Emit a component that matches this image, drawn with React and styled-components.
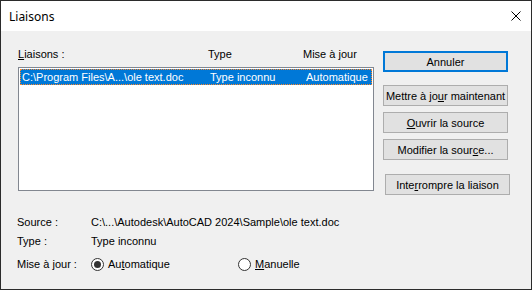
import React from 'react'
import styled, { createGlobalStyle } from 'styled-components'

const GlobalStyle = createGlobalStyle`
  html, body {
    margin: 0;
    padding: 0;
    background: #ffffff;
  }
  body {
    font-family: "Liberation Sans", Arial, sans-serif;
    font-size: 11px;
    color: #000000;
  }
`

const Window = styled.div`
  width: 532px;
  height: 290px;
  box-sizing: border-box;
  border: 1px solid #2b2b2b;
  background: #f0f0f0;
  display: flex;
  flex-direction: column;
`
const TitleBar = styled.div`
  height: 30px;
  flex-shrink: 0;
  background: #ffffff;
  display: flex;
  align-items: center;
  justify-content: space-between;
  padding: 0 10px 0 8px;
  font-family: "Noto Sans", "Open Sans", sans-serif;
  font-size: 12px;
  color: #000000;
`
const CloseIcon = styled.svg`
  width: 10px;
  height: 10px;
  display: block;
`
const Body = styled.div`
  padding: 16px 0 0 17px;
  display: flex;
  flex-direction: column;
`
const Top = styled.div`
  display: flex;
  align-items: flex-start;
  gap: 9px;
`
const LeftColumn = styled.div`
  width: 356px;
  display: flex;
  flex-direction: column;
`
const Columns = styled.div`
  display: grid;
  grid-template-columns: 190px 95px 1fr;
  height: 14px;
  line-height: 14px;
  white-space: nowrap;
`
const ListBox = styled.div`
  margin-top: 6px;
  height: 124px;
  box-sizing: border-box;
  border: 1px solid #828790;
  background: #ffffff;
  padding: 1px;
`
const Row = styled.div`
  display: grid;
  grid-template-columns: 188px 96px 1fr;
  height: 16px;
  box-sizing: border-box;
  line-height: 14px;
  padding-left: 1px;
  white-space: nowrap;
  background: ${p => (p.$selected ? '#0078d7' : 'transparent')};
  color: ${p => (p.$selected ? '#ffffff' : '#000000')};
  border: 1px dotted ${p => (p.$selected ? '#ff8728' : 'transparent')};
`
const RightColumn = styled.div`
  width: 128px;
  margin-top: 4px;
  display: flex;
  flex-direction: column;
`
const Button = styled.button`
  width: 125px;
  height: 21px;
  box-sizing: border-box;
  margin: ${p => p.$gap || 0}px 0 0 ${p => p.$shift || 0}px;
  padding: 0;
  font-family: "Liberation Sans", Arial, sans-serif;
  font-size: 11px;
  color: #000000;
  background: #e1e1e1;
  border: ${p => (p.$default ? '2px solid #0078d7' : '1px solid #adadad')};
  border-radius: 0;
  white-space: nowrap;
`
const Info = styled.div`
  margin: 20px 0 0 -1px;
  display: grid;
  grid-template-columns: 74px 1fr;
  row-gap: 5px;
  line-height: 14px;
  white-space: nowrap;
`
const UpdateRow = styled.div`
  grid-column: 1 / -1;
  margin-top: 4px;
  display: grid;
  grid-template-columns: 74px 147px 1fr;
  align-items: center;
`
const RadioOption = styled.label`
  display: flex;
  align-items: center;
  gap: 4px;
`
const RadioCircle = styled.span`
  width: 13px;
  height: 13px;
  box-sizing: border-box;
  border: 1px solid #333333;
  border-radius: 50%;
  background: #ffffff;
  display: flex;
  align-items: center;
  justify-content: center;

  &::after {
    content: '';
    width: 7px;
    height: 7px;
    border-radius: 50%;
    background: ${p => (p.$checked ? '#333333' : 'transparent')};
  }
`
const U = styled.span`
  text-decoration: underline;
`

const App = () => {
  return (
    <>
      <GlobalStyle />
      <Window>
        <TitleBar>
          <span>Liaisons</span>
          <CloseIcon viewBox="0 0 10 10">
            <path d="M0.5 0.5 L9.5 9.5 M9.5 0.5 L0.5 9.5" stroke="#000" strokeWidth="1" fill="none" />
          </CloseIcon>
        </TitleBar>
        <Body>
          <Top>
            <LeftColumn>
              <Columns>
                <span><U>L</U>iaisons :</span>
                <span>Type</span>
                <span>Mise à jour</span>
              </Columns>
              <ListBox>
                <Row $selected>
                  <span>C:\Program Files\A...\ole text.doc</span>
                  <span>Type inconnu</span>
                  <span>Automatique</span>
                </Row>
              </ListBox>
            </LeftColumn>
            <RightColumn>
              <Button $default>Annuler</Button>
              <Button $gap={13}>Mettre à jo<U>u</U>r maintenant</Button>
              <Button $gap={6}><U>O</U>uvrir la source</Button>
              <Button $gap={6}>Modifier la sour<U>c</U>e...</Button>
              <Button $gap={14} $shift={2}>Inte<U>r</U>rompre la liaison</Button>
            </RightColumn>
          </Top>
          <Info>
            <span>Source :</span>
            <span>C:\...\Autodesk\AutoCAD 2024\Sample\ole text.doc</span>
            <span>Type :</span>
            <span>Type inconnu</span>
            <UpdateRow>
              <span>Mise à jour :</span>
              <RadioOption>
                <RadioCircle $checked />
                <span>Au<U>t</U>omatique</span>
              </RadioOption>
              <RadioOption>
                <RadioCircle />
                <span><U>M</U>anuelle</span>
              </RadioOption>
            </UpdateRow>
          </Info>
        </Body>
      </Window>
    </>
  )
}

export default App
